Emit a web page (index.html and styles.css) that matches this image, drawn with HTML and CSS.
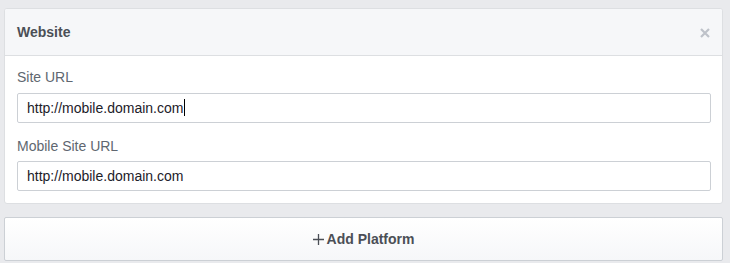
FILE: index.html
```html
<!DOCTYPE html>
<html lang="en">
<head>
    <meta charset="UTF-8">
    <title>Platforms</title>
    <link rel="stylesheet" href="styles.css">
</head>
<body>
    <!-- Website platform card -->
    <div class="platform-card">
        <div class="card-header">
            <span class="card-title">Website</span>
            <svg class="close-icon" width="10" height="10" viewBox="0 0 10 10">
                <path d="M1 1 L9 9 M9 1 L1 9" stroke="#bec2c9" stroke-width="2.2" fill="none"/>
            </svg>
        </div>
        <div class="card-body">
            <label class="field-label">Site URL</label>
            <div class="text-field">http://mobile.domain.com<span class="caret"></span></div>

            <label class="field-label second">Mobile Site URL</label>
            <div class="text-field">http://mobile.domain.com</div>
        </div>
    </div>

    <button class="add-btn">
        <svg class="plus-icon" width="11" height="11" viewBox="0 0 11 11">
            <path d="M5.5 0 V11 M0 5.5 H11" stroke="#4b4f56" stroke-width="1.3" fill="none"/>
        </svg>
        Add Platform
    </button>
</body>
</html>
```

FILE: styles.css
```css
body {
    margin: 0;
    padding: 8px 7px 0 4px;
    background-color: #e9eaed;
    font-family: "Liberation Sans", Arial, sans-serif;
    font-size: 14px;
}

.platform-card {
    background-color: #fff;
    border: 1px solid #dddfe2;
    border-radius: 3px;
    overflow: hidden;
}

.card-header {
    display: flex;
    justify-content: space-between;
    align-items: center;
    height: 46px;
    padding: 0 12px;
    background-color: #f6f7f9;
    border-bottom: 1px solid #dddfe2;
}

.card-title {
    font-weight: bold;
    color: #4b4f56;
}

.close-icon {
    display: block;
    margin-top: 1px;
}

.card-body {
    display: flex;
    flex-direction: column;
    padding: 12px 11px 12px 12px;
}

.field-label {
    line-height: 18px;
    color: #606770;
    margin-bottom: 7px;
}

.field-label.second {
    margin-top: 14px;
    margin-bottom: 6px;
}

.text-field {
    height: 28px;
    line-height: 28px;
    padding: 0 9px;
    border: 1px solid #ccd0d5;
    border-radius: 2px;
    color: #1d2129;
}

.caret {
    display: inline-block;
    width: 1px;
    height: 17px;
    margin-left: 1px;
    vertical-align: -3px;
    background-color: #000;
}

.add-btn {
    display: flex;
    justify-content: center;
    align-items: center;
    gap: 3px;
    width: 100%;
    height: 44px;
    margin-top: 13px;
    border: 1px solid #ccd0d5;
    border-radius: 2px;
    background: linear-gradient(#fff, #f6f7f9);
    font-family: inherit;
    font-size: 14px;
    font-weight: bold;
    color: #4b4f56;
}

.plus-icon {
    display: block;
    margin-top: 1px;
}
```
